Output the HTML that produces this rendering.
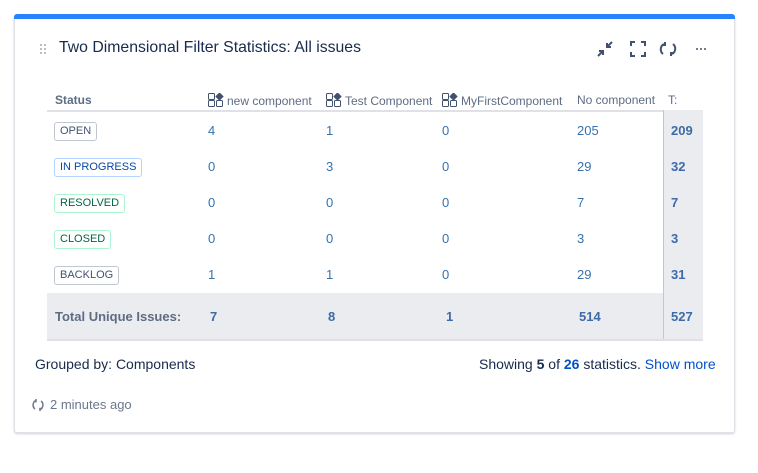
<!DOCTYPE html>
<html><head><meta charset="utf-8"><style>
*{margin:0;padding:0;box-sizing:border-box}
body{width:758px;height:473px;background:#fff;font-family:"Liberation Sans",sans-serif;position:relative;overflow:hidden;color:#172b4d}
.a{position:absolute;white-space:nowrap}
.card{position:absolute;left:14px;top:15px;width:721px;height:418px;border:1px solid #dfe1e6;border-top:none;border-radius:3px;box-shadow:0 1px 2px rgba(9,30,66,.2)}
.bar{position:absolute;left:14px;top:14px;width:721px;height:5px;background:#2684ff;border-radius:3px 3px 0 0}
.h{font-size:12px;color:#5e6c84;top:93px}
.n{font-size:13px;color:#3572b0}
.b{font-weight:bold;color:#3d6aa8}
.lz{font-size:11px;border:1px solid #c1c7d0;border-radius:3px;padding:2px 5px;line-height:13px;color:#42526e}
.ic{display:inline-block;vertical-align:-2px;margin-right:2px}
</style></head><body>
<div class="card"></div>
<div class="bar"></div>
<div class="a" style="left:39px;top:43px;width:8px;height:11px;background-image:radial-gradient(#b3bac5 1px,transparent 1.2px);background-size:4px 4px"></div>
<div class="a" style="left:59px;top:39px;font-size:15.8px;color:#172b4d">Two Dimensional Filter Statistics: All issues</div>
<svg class="a" style="left:596px;top:40px" width="120" height="18" viewBox="0 0 120 18" fill="none" stroke="#42526e" stroke-width="2">
<path d="M2 16l5-5M3 11h4v4M16 2l-5 5M11 3v4h4"/>
<path d="M35 6V2h4M45 2h4v4M49 12v4h-4M39 16h-4v-4"/>
<path d="M68 4a6 6 0 0 0-1 10M69 2v3h-3M76 14a6 6 0 0 0 1-10M75 16v-3h3"/>
<circle cx="101" cy="9" r="1" fill="#42526e" stroke="none"/><circle cx="105" cy="9" r="1" fill="#42526e" stroke="none"/><circle cx="109" cy="9" r="1" fill="#42526e" stroke="none"/>
</svg>
<div class="a" style="left:47px;top:110px;width:616px;height:2px;background:#dfe1e6"></div>
<div class="a" style="left:663px;top:110px;width:40px;height:231px;background:#ebecf0;border-left:1px solid #c1c7d0"></div>
<div class="a" style="left:47px;top:293px;width:616px;height:48px;background:#ebecf0;border-bottom:2px solid #dfe1e6"></div>
<div class="a" style="left:663px;top:339px;width:40px;height:2px;background:#dfe1e6"></div>
<div class="a h" style="left:55px;font-weight:bold">Status</div>
<div class="a h" style="left:208px"><svg class="ic" width="17" height="14" viewBox="0 0 17 14" fill="none" stroke="#42526e"><rect x=".5" y=".5" width="6" height="6" rx="1"/><rect x=".5" y="7.5" width="6" height="6" rx="1"/><rect x="8.5" y="7.5" width="6" height="6" rx="1"/><path d="M11.5 0l3.5 3.5-3.5 3.5-3.5-3.5z" fill="#42526e"/></svg>new component</div>
<div class="a h" style="left:326px"><svg class="ic" width="17" height="14" viewBox="0 0 17 14" fill="none" stroke="#42526e"><rect x=".5" y=".5" width="6" height="6" rx="1"/><rect x=".5" y="7.5" width="6" height="6" rx="1"/><rect x="8.5" y="7.5" width="6" height="6" rx="1"/><path d="M11.5 0l3.5 3.5-3.5 3.5-3.5-3.5z" fill="#42526e"/></svg>Test Component</div>
<div class="a h" style="left:442px"><svg class="ic" width="17" height="14" viewBox="0 0 17 14" fill="none" stroke="#42526e"><rect x=".5" y=".5" width="6" height="6" rx="1"/><rect x=".5" y="7.5" width="6" height="6" rx="1"/><rect x="8.5" y="7.5" width="6" height="6" rx="1"/><path d="M11.5 0l3.5 3.5-3.5 3.5-3.5-3.5z" fill="#42526e"/></svg>MyFirstComponent</div>
<div class="a h" style="left:577px">No component</div>
<div class="a h" style="left:668px">T:</div>

<div class="a lz" style="left:54px;top:122px">OPEN</div>
<div class="a lz" style="left:54px;top:158px;border-color:#b3d4ff;color:#0747a6">IN PROGRESS</div>
<div class="a lz" style="left:54px;top:194px;border-color:#abf5d1;color:#006644">RESOLVED</div>
<div class="a lz" style="left:54px;top:230px;border-color:#abf5d1;color:#006644">CLOSED</div>
<div class="a lz" style="left:54px;top:266px">BACKLOG</div>

<div class="a n" style="left:208px;top:123px">4</div><div class="a n" style="left:326px;top:123px">1</div><div class="a n" style="left:442px;top:123px">0</div><div class="a n" style="left:577px;top:123px">205</div><div class="a n b" style="left:671px;top:123px">209</div>
<div class="a n" style="left:208px;top:159px">0</div><div class="a n" style="left:326px;top:159px">3</div><div class="a n" style="left:442px;top:159px">0</div><div class="a n" style="left:577px;top:159px">29</div><div class="a n b" style="left:671px;top:159px">32</div>
<div class="a n" style="left:208px;top:195px">0</div><div class="a n" style="left:326px;top:195px">0</div><div class="a n" style="left:442px;top:195px">0</div><div class="a n" style="left:577px;top:195px">7</div><div class="a n b" style="left:671px;top:195px">7</div>
<div class="a n" style="left:208px;top:231px">0</div><div class="a n" style="left:326px;top:231px">0</div><div class="a n" style="left:442px;top:231px">0</div><div class="a n" style="left:577px;top:231px">3</div><div class="a n b" style="left:671px;top:231px">3</div>
<div class="a n" style="left:208px;top:267px">1</div><div class="a n" style="left:326px;top:267px">1</div><div class="a n" style="left:442px;top:267px">0</div><div class="a n" style="left:577px;top:267px">29</div><div class="a n b" style="left:671px;top:267px">31</div>

<div class="a" style="left:55px;top:309px;font-size:13px;font-weight:bold;color:#5e6c84">Total Unique Issues:</div>
<div class="a n b" style="left:210px;top:309px">7</div><div class="a n b" style="left:328px;top:309px">8</div><div class="a n b" style="left:446px;top:309px">1</div><div class="a n b" style="left:579px;top:309px">514</div><div class="a n b" style="left:671px;top:309px">527</div>

<div class="a" style="left:35px;top:356px;font-size:14px">Grouped by: Components</div>
<div class="a" style="left:479px;top:356px;font-size:14px">Showing <b>5</b> of <b style="color:#0052cc">26</b> statistics. <span style="color:#0052cc">Show more</span></div>
<svg class="a" style="left:31px;top:398px" width="14" height="14" viewBox="0 0 14 14" fill="none" stroke="#6b778c" stroke-width="1.5"><path d="M5 2.5a5 5 0 0 0-1 8.5M5 1v2.5H2.5M9 11.5a5 5 0 0 0 1-8.5M9 13v-2.5h2.5"/></svg>
<div class="a" style="left:50px;top:397px;font-size:13px;color:#6b778c">2 minutes ago</div>
</body></html>
